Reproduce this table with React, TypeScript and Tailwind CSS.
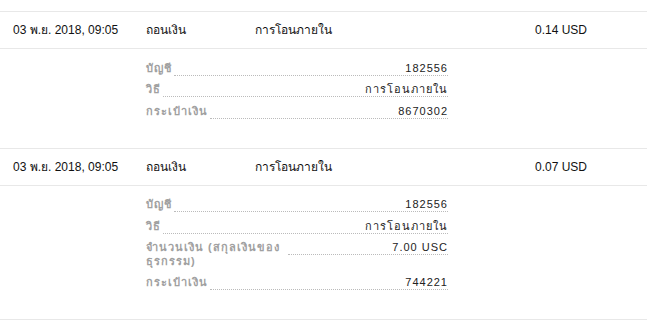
import React from "react";

type Detail = { label: string; value: string };
type Tx = { date: string; type: string; method: string; amount: string; details: Detail[] };

const txs: Tx[] = [
  {
    date: "03 พ.ย. 2018, 09:05",
    type: "ถอนเงิน",
    method: "การโอนภายใน",
    amount: "0.14 USD",
    details: [
      { label: "บัญชี", value: "182556" },
      { label: "วิธี", value: "การโอนภายใน" },
      { label: "กระเป๋าเงิน", value: "8670302" },
    ],
  },
  {
    date: "03 พ.ย. 2018, 09:05",
    type: "ถอนเงิน",
    method: "การโอนภายใน",
    amount: "0.07 USD",
    details: [
      { label: "บัญชี", value: "182556" },
      { label: "วิธี", value: "การโอนภายใน" },
      { label: "จำนวนเงิน (สกุลเงินของธุรกรรม)", value: "7.00 USC" },
      { label: "กระเป๋าเงิน", value: "744221" },
    ],
  },
];

function Row({ tx }: { tx: Tx }) {
  return (
    <div className="border-b border-[#e8e8e8]">
      <div className="flex h-[37px] items-center border-b border-[#e8e8e8] text-[12px] text-[#111]">
        <div className="w-[146px] shrink-0 pl-[13px]">{tx.date}</div>
        <div className="w-[109px] shrink-0">{tx.type}</div>
        <div className="flex-1">{tx.method}</div>
        <div className="w-[100px] text-right">{tx.amount}</div>
        <div className="w-[60px] shrink-0" />
      </div>
      <div className="flex flex-col gap-y-[6.5px] pb-[29px] pl-[146px] pt-[11.5px]">
        {tx.details.map((d, i) => (
          <div key={i} className="flex w-[302px] items-start text-[11px] leading-[14px] tracking-[1px]">
            <div className="max-w-[140px] font-semibold text-[#a0a0a0]">{d.label}</div>
            <div className="ml-[2px] flex-1 border-b border-dotted border-[#bbb] text-right text-[#222]">
              {d.value}
            </div>
          </div>
        ))}
      </div>
    </div>
  );
}

export default function App() {
  return (
    <div
      className="w-[647px] bg-white pt-[11px]"
      style={{ fontFamily: '"Liberation Sans", Arial, sans-serif' }}
    >
      <div className="border-t border-[#e8e8e8]">
        {txs.map((tx, i) => (
          <Row key={i} tx={tx} />
        ))}
      </div>
    </div>
  );
}
